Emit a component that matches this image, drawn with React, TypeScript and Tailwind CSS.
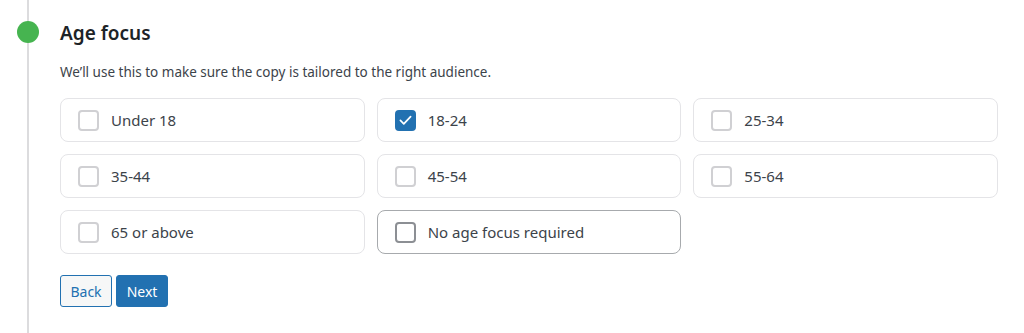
import { useState } from "react";

const OPTIONS = [
  "Under 18",
  "18-24",
  "25-34",
  "35-44",
  "45-54",
  "55-64",
  "65 or above",
  "No age focus required",
];

function CheckIcon() {
  return (
    <svg viewBox="0 0 20 20" className="h-[18px] w-[18px]" fill="none">
      <path d="M4 10.5l4 4 8-8.5" stroke="white" strokeWidth="2" strokeLinecap="round" strokeLinejoin="round" />
    </svg>
  );
}

function OptionCard({
  label,
  checked,
  hover,
  onToggle,
}: {
  label: string;
  checked: boolean;
  hover?: boolean;
  onToggle: () => void;
}) {
  return (
    <button
      type="button"
      onClick={onToggle}
      className={`flex h-[44px] items-center gap-[12px] rounded-[8px] border bg-white pl-[17px] text-left ${
        hover ? "border-[#a7aaad]" : "border-[#e4e4e7]"
      }`}
    >
      <span
        className={`flex h-[21px] w-[21px] shrink-0 items-center justify-center rounded-[4px] border-2 ${
          checked
            ? "border-[#2271b1] bg-[#2271b1]"
            : hover
            ? "border-[#8c8f94] bg-white"
            : "border-[#d0d0d3] bg-white"
        }`}
      >
        {checked && <CheckIcon />}
      </span>
      <span className="text-[15px] text-[#3c434a]">{label}</span>
    </button>
  );
}

export default function App() {
  const [selected, setSelected] = useState<string[]>(["18-24"]);

  const toggle = (label: string) =>
    setSelected((s) => (s.includes(label) ? s.filter((x) => x !== label) : [...s, label]));

  return (
    <div
      className="flex h-[333px] w-[1024px] bg-white"
      style={{ fontFamily: '"Noto Sans", "Open Sans", sans-serif' }}
    >
      {/* ── Timeline rail ─────────────────────────────────────────── */}
      <div className="relative w-[60px] shrink-0">
        <div className="absolute bottom-0 left-[27px] top-0 w-[2px] bg-[#dcdcde]" />
        <div className="absolute left-[17px] top-[21px] h-[22px] w-[22px] rounded-full bg-[#46b450]" />
      </div>

      {/* ── Step content ──────────────────────────────────────────── */}
      <div className="w-[938px] pt-[20px]">
        <h2 className="text-[19px] font-semibold leading-[26px] text-[#1d2327]">Age focus</h2>
        <p className="mt-[16px] text-[13.5px] leading-[20px] text-[#3c434a]">
          We’ll use this to make sure the copy is tailored to the right audience.
        </p>

        <div className="mt-[16px] grid grid-cols-3 gap-[12px]">
          {OPTIONS.map((o, i) => (
            <OptionCard
              key={o}
              label={o}
              checked={selected.includes(o)}
              hover={i === OPTIONS.length - 1}
              onToggle={() => toggle(o)}
            />
          ))}
        </div>

        <div className="mt-[21px] flex gap-[4px]">
          <button className="h-[32px] w-[52px] rounded-[3px] border border-[#2271b1] bg-[#f6f7f7] text-[14px] text-[#2271b1]">
            Back
          </button>
          <button className="h-[32px] w-[52px] rounded-[3px] border border-[#2271b1] bg-[#2271b1] text-[14px] text-white">
            Next
          </button>
        </div>
      </div>
    </div>
  );
}
